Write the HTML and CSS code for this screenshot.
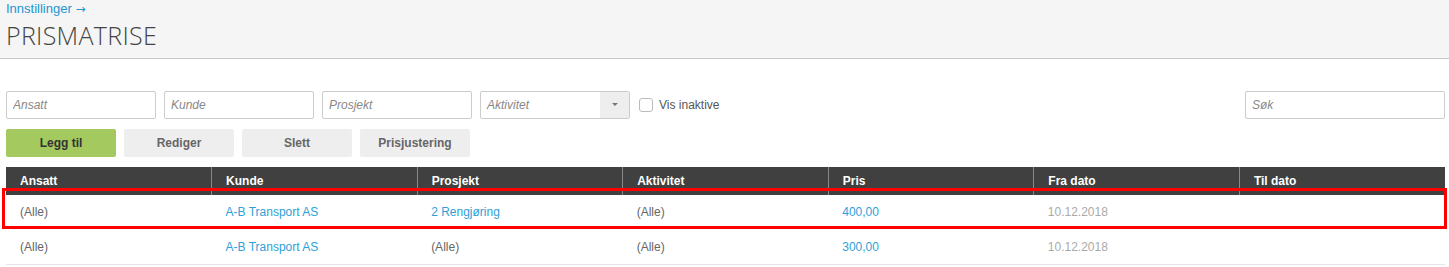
FILE: index.html
```html
<!DOCTYPE html>
<html lang="no">
<head>
  <meta charset="UTF-8">
  <title>Prismatrise</title>
  <link rel="stylesheet" href="styles.css">
</head>
<body>
  <div class="page-header">
    <a href="#" class="crumb">Innstillinger <span class="arrow">&rarr;</span></a>
    <h1>PRISMATRISE</h1>
  </div>

  <div class="content">
    <div class="filters">
      <input type="text" class="field" placeholder="Ansatt">
      <input type="text" class="field" placeholder="Kunde">
      <input type="text" class="field" placeholder="Prosjekt">
      <div class="select">
        <span class="select-text">Aktivitet</span>
        <span class="select-arrow"></span>
      </div>
      <label class="check"><span class="box"></span>Vis inaktive</label>
      <input type="text" class="field search" placeholder="Søk">
    </div>

    <div class="actions">
      <button class="btn btn-primary">Legg til</button>
      <button class="btn">Rediger</button>
      <button class="btn">Slett</button>
      <button class="btn">Prisjustering</button>
    </div>

    <div class="grid-wrap">
      <table class="grid">
        <thead>
          <tr>
            <th>Ansatt</th>
            <th>Kunde</th>
            <th>Prosjekt</th>
            <th>Aktivitet</th>
            <th>Pris</th>
            <th>Fra dato</th>
            <th>Til dato</th>
          </tr>
        </thead>
        <tbody>
          <tr>
            <td>(Alle)</td>
            <td class="link">A-B Transport AS</td>
            <td class="link">2 Rengjøring</td>
            <td>(Alle)</td>
            <td class="link">400,00</td>
            <td class="muted">10.12.2018</td>
            <td></td>
          </tr>
          <tr>
            <td>(Alle)</td>
            <td class="link">A-B Transport AS</td>
            <td>(Alle)</td>
            <td>(Alle)</td>
            <td class="link">300,00</td>
            <td class="muted">10.12.2018</td>
            <td></td>
          </tr>
        </tbody>
      </table>
      <!-- markering av valgt rad -->
      <div class="highlight"></div>
    </div>
  </div>
</body>
</html>
```

FILE: styles.css
```css
body {
  margin: 0;
  padding: 0;
  font-family: "Liberation Sans", Arial, sans-serif;
  font-size: 12px;
  color: #555;
  background: #fff;
}
.page-header {
  background: #f5f5f5;
  border-bottom: 1px solid #c8c8c8;
  height: 58px;
  padding: 0 6px;
  box-sizing: content-box;
}
.crumb {
  display: block;
  color: #2196d3;
  text-decoration: none;
  font-size: 13px;
  line-height: 17px;
}
.crumb .arrow {
  font-family: "DejaVu Sans", sans-serif;
  font-size: 12px;
}
.page-header h1 {
  margin: 0;
  font-family: "Open Sans", sans-serif;
  font-weight: 300;
  font-size: 25px;
  line-height: 35px;
  color: #444;
  letter-spacing: 0.3px;
}
.content {
  padding: 32px 4px 0 6px;
}
.filters {
  display: flex;
  align-items: center;
  gap: 8px;
  height: 28px;
}
.field {
  width: 150px;
  height: 28px;
  box-sizing: border-box;
  border: 1px solid #ccc;
  border-radius: 2px;
  padding: 0 6px;
  font-family: "Liberation Sans", Arial, sans-serif;
  font-size: 12px;
  outline: none;
}
.field::placeholder {
  color: #888;
  font-style: italic;
}
.select {
  width: 150px;
  height: 28px;
  box-sizing: border-box;
  border: 1px solid #ccc;
  border-radius: 2px;
  display: flex;
}
.select-text {
  flex: 1;
  padding-left: 6px;
  line-height: 26px;
  color: #888;
  font-style: italic;
}
.select-arrow {
  width: 29px;
  background: #eee;
  position: relative;
}
.select-arrow::after {
  content: "";
  position: absolute;
  left: 12px;
  top: 11px;
  border-left: 3px solid transparent;
  border-right: 3px solid transparent;
  border-top: 3px solid #777;
}
.check {
  display: flex;
  align-items: center;
  gap: 6px;
  margin-left: 1px;
  font-size: 12px;
  color: #555;
}
.check .box {
  width: 12px;
  height: 12px;
  border: 1px solid #bbb;
  border-radius: 3px;
  background: #fff;
}
.search {
  margin-left: auto;
  width: 200px;
}
.actions {
  display: flex;
  gap: 8px;
  margin-top: 10px;
}
.btn {
  width: 110px;
  height: 28px;
  border: none;
  border-radius: 2px;
  background: #eee;
  color: #666;
  font-family: "Liberation Sans", Arial, sans-serif;
  font-size: 12px;
  font-weight: bold;
  cursor: pointer;
}
.btn-primary {
  background: #a3c95f;
  color: #333;
}
.grid-wrap {
  position: relative;
  margin-top: 10px;
}
.grid {
  width: 100%;
  border-collapse: collapse;
  table-layout: fixed;
}
.grid th {
  background: #404040;
  color: #fff;
  text-align: left;
  font-weight: bold;
  height: 28px;
  padding: 0 14px;
  border-left: 1px solid #888;
}
.grid th:first-child {
  border-left: none;
}
.grid td {
  height: 34px;
  padding: 0 14px;
  border-bottom: 1px solid #e6e6e6;
  color: #666;
}
.grid tbody tr:first-child td {
  border-bottom: none;
}
.grid tbody tr:last-child td {
  height: 35px;
}
.grid td.link {
  color: #2e9fd8;
}
.grid td.muted {
  color: #aaa;
}
.highlight {
  position: absolute;
  left: -4px;
  right: -2px;
  top: 21px;
  height: 41px;
  border: 3px solid #f00;
  box-sizing: border-box;
  pointer-events: none;
}
```
